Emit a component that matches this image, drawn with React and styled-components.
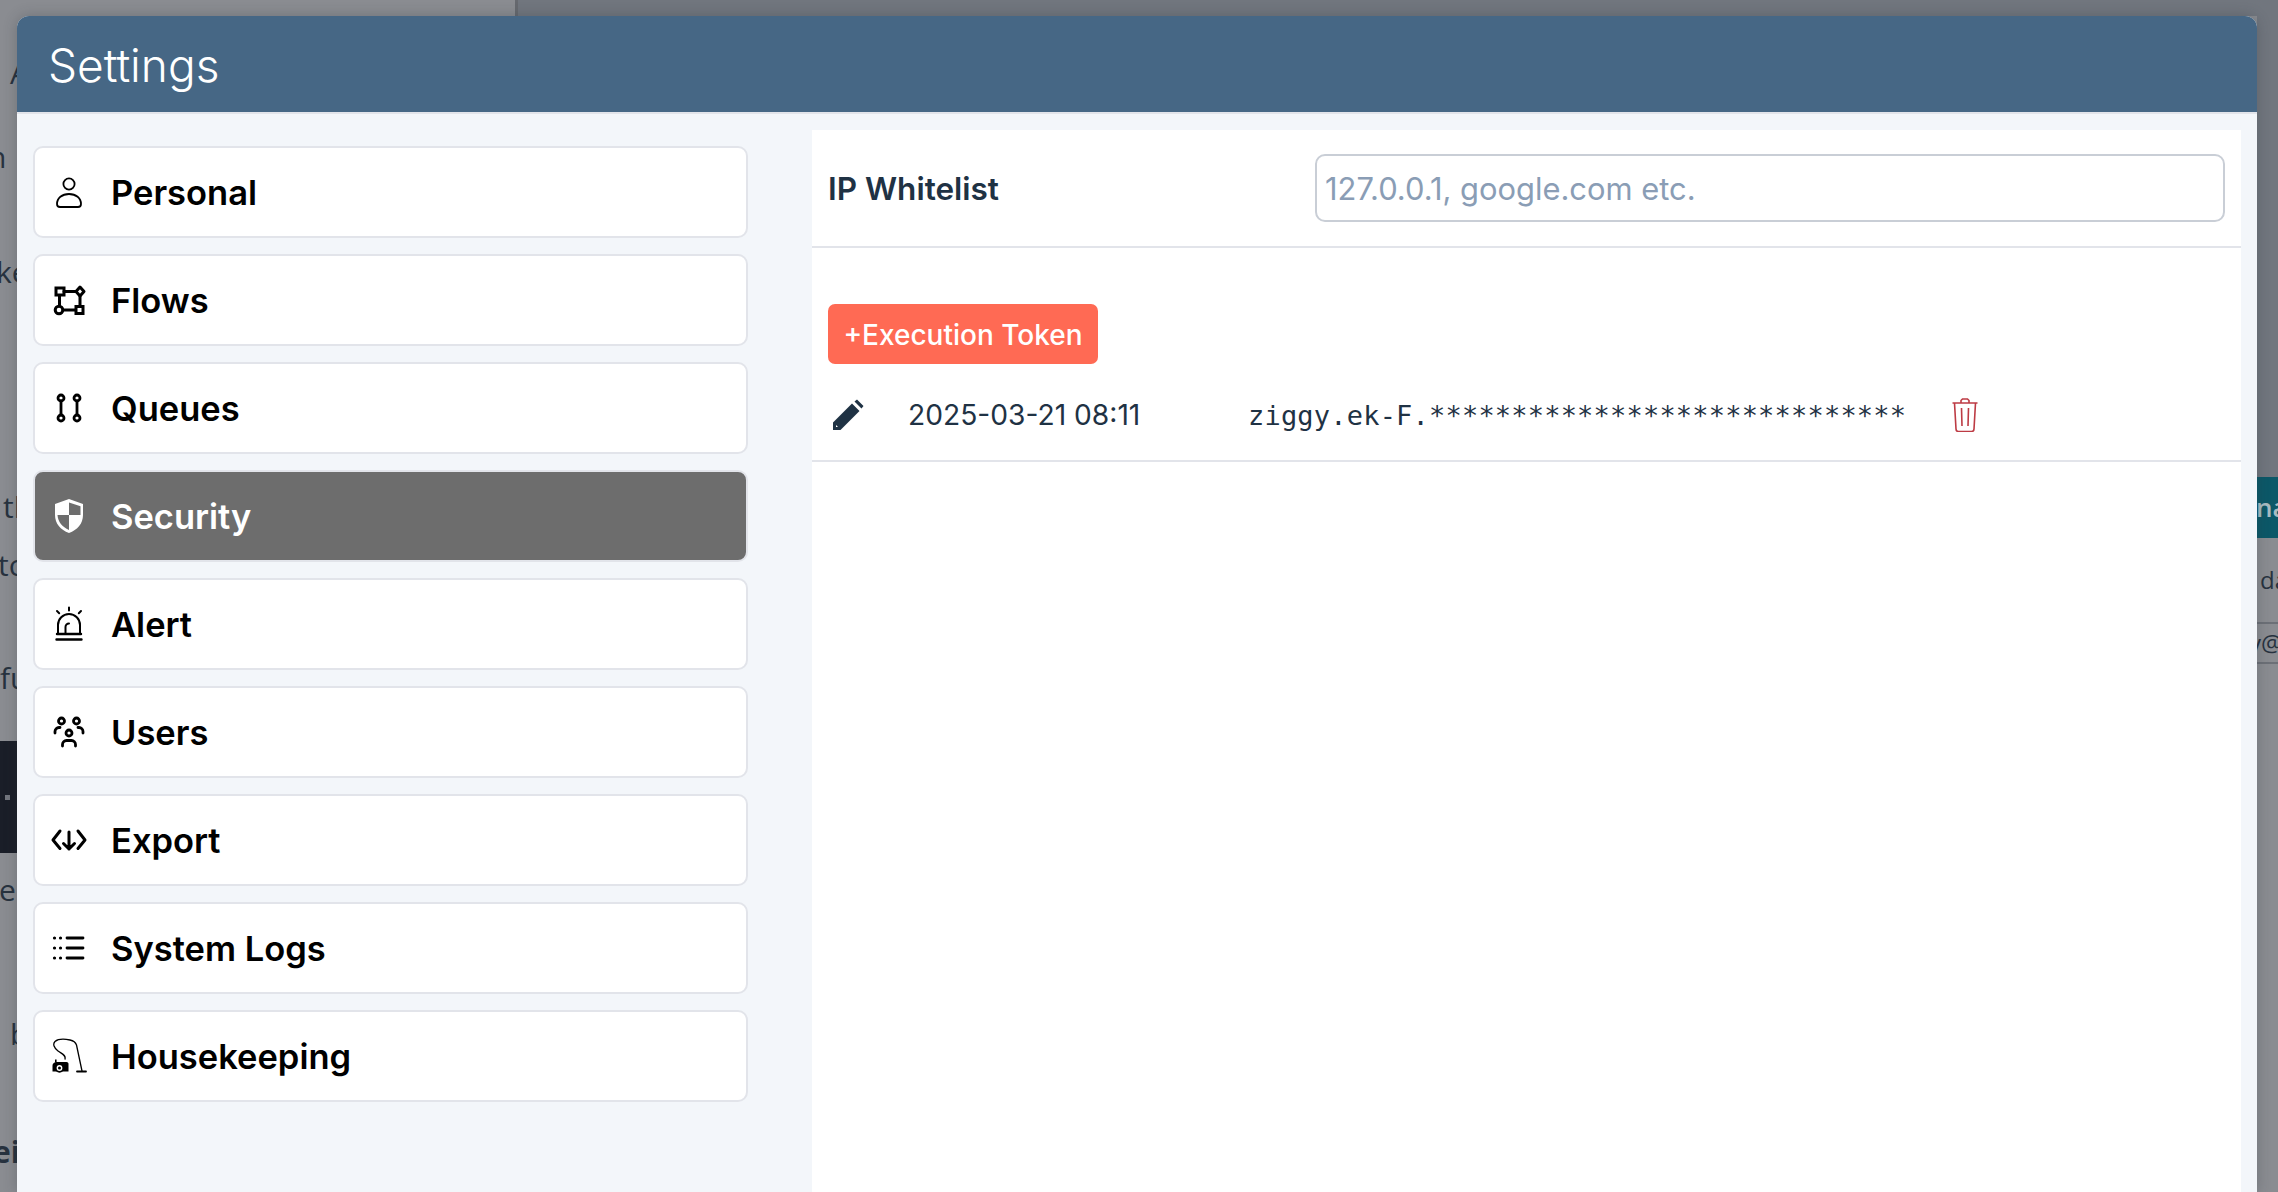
import React from "react";
import styled, { createGlobalStyle } from "styled-components";

const Global = createGlobalStyle`
  html, body { margin: 0; padding: 0; width: 2278px; height: 1192px; overflow: hidden; }
  * { box-sizing: border-box; }
  body { font-family: Inter, "Liberation Sans", sans-serif; }
`;

const Page = styled.div`
  position: relative; width: 2278px; height: 1192px; overflow: hidden;
  background: #8a8c91; display: flex; flex-direction: column;
`;
const TopBand = styled.div`height: 16px; display: flex; flex: none;`;
const TopLight = styled.div`width: 518px; border-right: 3px solid #66696f;`;
const TopDark = styled.div`flex: 1; background: #71767e;`;
const Behind = styled.div`flex: 1; display: flex; justify-content: space-between; min-height: 0;`;
const LeftStrip = styled.div`width: 17px; overflow: hidden; display: flex; flex-direction: column;`;
const RightStrip = styled.div`width: 21px; overflow: hidden; display: flex; flex-direction: column;`;
const RightTop = styled.div`height: 461px; background: #71767e; flex: none;`;
const Fragment = styled.div`
  flex: none; height: 36px; line-height: 36px; white-space: nowrap;
  font-family: "Open Sans", sans-serif; font-size: ${p => p.$size || 30}px;
  font-weight: ${p => p.$bold ? 700 : 400};
  color: #27323f;
  margin-top: ${p => p.$top}px; margin-left: ${p => p.$x}px;
`;
const DarkBar = styled.div`
  flex: none; height: 112px; margin-top: ${p => p.$top}px; background: #1a1e28;
  display: flex; align-items: center; padding: 0 0 0 5px;
  &::before { content: ""; width: 5px; height: 5px; background: #73767e; }
`;
const TealBar = styled.div`
  flex: none; height: 61px; background: #0c5868; color: #a8bcc2; white-space: nowrap;
  font: 600 26px/61px "Open Sans", sans-serif; text-indent: -1px;
`;
const FieldEdge = styled.div`
  flex: none; height: 42px; margin-top: 24px; border-top: 2px solid #6c7077; border-bottom: 2px solid #6c7077;
  color: #27323f; font: 400 24px/38px "Open Sans", sans-serif; white-space: nowrap; text-indent: -8px;
`;

const Modal = styled.section`
  position: absolute; left: 17px; top: 16px; right: 21px; bottom: 0;
  background: #f3f6fa; border-radius: 12px 12px 0 0;
  box-shadow: 0 0 14px rgba(40, 45, 55, .28);
  display: flex; flex-direction: column;
`;
const Header = styled.header`
  flex: none; height: 98px; background: #466785;
  border-bottom: 2px solid #e2e4ea; border-radius: 12px 12px 0 0;
  color: #fff; font-size: 46px; font-weight: 300; line-height: 99px; padding-left: 31px;
`;
const Body = styled.div`flex: 1; display: flex; min-height: 0;`;
const Sidebar = styled.nav`
  flex: none; width: 795px; padding: 32px 64px 0 16px;
  display: flex; flex-direction: column; gap: 16px;
`;
const MenuItem = styled.div`
  flex: none; height: 92px; border-radius: 10px;
  border: 2px solid #e2e4ea;
  background: ${p => p.$active ? "#6d6d6d" : "#fff"};
  color: ${p => p.$active ? "#fff" : "#000"};
  display: flex; align-items: center; padding-left: 16px; gap: 24px;
  font-size: 34.5px; font-weight: 600;
  svg { flex: none; display: block; }
`;
const Panel = styled.main`
  flex: 1; margin: 16px 16px 0 0; background: #fff; min-width: 0;
`;
const WhitelistRow = styled.div`
  height: 118px; border-bottom: 2px solid #e2e4ea;
  display: flex; align-items: center; padding: 0 16px 0 16px;
`;
const FieldLabel = styled.label`
  flex: none; width: 487px; font-size: 31.5px; font-weight: 600; color: #1f3244;
`;
const TextInput = styled.input`
  flex: 1; min-width: 0; height: 68px; border: 2px solid #c9ced6; border-radius: 10px;
  padding: 0 8px; font: 400 30.9px Inter, sans-serif; background: #fff; outline: none;
  &::placeholder { color: #8a9db5; opacity: 1; }
`;
const TokenSection = styled.div`padding-top: 56px;`;
const AddButton = styled.button`
  display: block; margin-left: 16px; width: 270px; height: 60px; border: 0; border-radius: 7px;
  background: #ff6a54; color: #fff; font: 500 28px Inter, sans-serif; padding: 2px 0 0;
`;
const TokenRow = styled.div`
  height: 98px; border-bottom: 2px solid #e2e4ea; display: flex; align-items: center; padding: 6px 0 0 20px;
  color: #1f3244; svg { flex: none; display: block; }
`;
const TokenDate = styled.span`
  flex: none; width: 340px; margin-left: 44px; font-size: 28.2px; font-weight: 400;
`;
const TokenValue = styled.span`
  flex: none; width: 704px; font-family: "DejaVu Sans Mono", monospace; font-size: 27px; white-space: nowrap;
  letter-spacing: .2px;
`;

const I = ({ children }) => (
  <svg width="36" height="36" viewBox="0 0 36 36" fill="none" stroke="currentColor" strokeWidth="2.2" strokeLinecap="round" strokeLinejoin="round">{children}</svg>
);

const icons = {
  Personal: <I><circle cx="18" cy="10" r="5.6" strokeWidth="1.8" /><path strokeWidth="1.8" d="M9 33h18a3 3 0 0 0 3-3c0-6-5-10-12-10S6 24 6 30a3 3 0 0 0 3 3z" /></I>,
  Flows: <I><g strokeWidth="3"><rect x="5" y="6" width="8" height="7" strokeLinejoin="miter" /><path d="M13 9.500h12M8.500 14v9.500M29 14v9M12.500 28h12" /><path d="M29 5l4 4.500-4 4.500-4-4.500z" /><circle cx="8" cy="28" r="3.800" /><rect x="25" y="24.500" width="7" height="7" strokeLinejoin="miter" /></g></I>,
  Queues: <I><g strokeWidth="2.800"><circle cx="10" cy="8" r="3" /><circle cx="26" cy="8" r="3" /><circle cx="10" cy="28" r="3" /><circle cx="26" cy="28" r="3" /><path d="M10 11v14M26 11v14" /></g></I>,
  Security: <I><path fill="currentColor" stroke="none" fillRule="evenodd" d="M18 1l14 5v11c0 8.500-5.500 15-14 18C9.500 32 4 25.500 4 17V6zM18 4.500L29.500 8.200V17H18zM18 17H6.500c.4 6.800 4.800 12 11.500 15z" /></I>,
  Alert: <I><g strokeWidth="2"><path d="M7 28V19a11 11 0 0 1 22 0v9M18 1.500v3M6 5l2.200 2.200M30 5l-2.200 2.200" /><path d="M14.500 28v-7a3.500 3.500 0 0 1 3.500-3.500" /><path d="M6 28h24M5.500 33.500h25" strokeWidth="2.400" /></g></I>,
  Users: <I><g strokeWidth="2.800"><circle cx="10.500" cy="7" r="3" /><circle cx="25.500" cy="7" r="3" /><circle cx="18" cy="19" r="3" /><path d="M4 19v-1.500a4 4 0 0 1 4-4h1M32 19v-1.500a4 4 0 0 0-4-4h-1M11.500 32v-1.500a4 4 0 0 1 4-4h5a4 4 0 0 1 4 4V32" /></g></I>,
  Export: <I><g strokeWidth="3"><path d="M9 9l-7 9 7 8.500M27 9l7 9-7 8.500M18 10v17M12.500 21.500l5.500 5.500 5.500-5.500" /></g></I>,
  "System Logs": <I><g strokeWidth="2.800"><path d="M16 8h16M16 18h16M16 28h16" /><path d="M3.500 8h.01M9.500 8h.01M3.500 18h.01M9.500 18h.01M3.500 28h.01M9.500 28h.01" strokeWidth="3.200" /></g></I>,
  Housekeeping: <I><path strokeWidth="1.300" d="M14 21c1-4-3-5-7-8C3 10 1.500 6 4 3.500 7 1 14 1 19 2c3 .6 5.500 2 6.500 5L31 33" /><path stroke="none" fill="currentColor" d="M1.500 28c0-3 2-4 5-4h9c1.500 0 2 1 2 2v7.500h-16z" /><path stroke="none" fill="currentColor" d="M4 21.500h1.600v3H4z" /><circle cx="8.500" cy="30" r="3.800" fill="#fff" stroke="currentColor" strokeWidth="1.800" /><circle cx="8.500" cy="30" r="1.500" fill="currentColor" stroke="none" /><path strokeWidth="1.800" d="M26 33.500h9" /></I>,
};

const items = ["Personal", "Flows", "Queues", "Security", "Alert", "Users", "Export", "System Logs", "Housekeeping"];

export default function App() {
  return (
    <Page>
      <Global />
      <TopBand><TopLight /><TopDark /></TopBand>
      <Behind>
        <LeftStrip>
          <Fragment $top={39} $x={10}>A</Fragment>
          <Fragment $top={48} $x={-12}>n</Fragment>
          <Fragment $top={79} $x={-4}>ke</Fragment>
          <Fragment $top={199} $x={3}>th</Fragment>
          <Fragment $top={22} $x={-2}>to</Fragment>
          <Fragment $top={77} $x={0}>fu</Fragment>
          <DarkBar $top={45} />
          <Fragment $top={19} $x={-1}>e</Fragment>
          <Fragment $top={108} $x={10}>b</Fragment>
          <Fragment $top={82} $x={-7} $bold>ei</Fragment>
        </LeftStrip>
        <RightStrip>
          <RightTop />
          <TealBar>na</TealBar>
          <Fragment $top={24} $x={3} $size={24}>da</Fragment>
          <FieldEdge>y@</FieldEdge>
        </RightStrip>
      </Behind>
      <Modal>
        <Header>Settings</Header>
        <Body>
          <Sidebar>
            {items.map(name => (
              <MenuItem key={name} $active={name === "Security"}>
                {icons[name]}
                <span>{name}</span>
              </MenuItem>
            ))}
          </Sidebar>
          <Panel>
            <WhitelistRow>
              <FieldLabel>IP Whitelist</FieldLabel>
              <TextInput placeholder="127.0.0.1, google.com etc." />
            </WhitelistRow>
            <TokenSection>
              <AddButton>+Execution Token</AddButton>
              <TokenRow>
                <svg width="32" height="32" viewBox="0 0 32 32" fill="currentColor"><path d="M1 31v-7.500L20 4.500l7.500 7.500L8.500 31zM4 26v2h2l-2-2z M22.500 2.500l2.500-2 6.500 6.500-2 2.500z" fillRule="evenodd" /></svg>
                <TokenDate>2025-03-21 08:11</TokenDate>
                <TokenValue>ziggy.ek-F.*****************************</TokenValue>
                <svg width="26" height="34" viewBox="0 0 26 34" fill="none" stroke="#bd3b44" strokeWidth="1.600"><path d="M0.500 5h25M9 5V2.500L10.500 1h5L17 2.500V5M2.500 5l1.500 26a2.500 2.500 0 0 0 2.500 2.500h13A2.500 2.500 0 0 0 22 31l1.500-26M9.500 10l.5 18M16.500 10L16 28" /></svg>
              </TokenRow>
            </TokenSection>
          </Panel>
        </Body>
      </Modal>
    </Page>
  );
}
